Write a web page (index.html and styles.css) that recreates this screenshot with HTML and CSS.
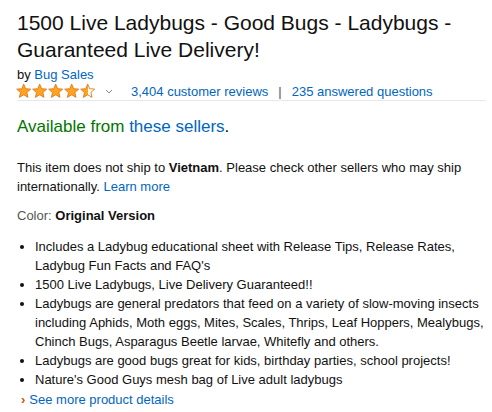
FILE: index.html
```html
<!DOCTYPE html>
<html>
<head>
<meta charset="utf-8">
<link rel="stylesheet" href="styles.css">
</head>
<body>
<div class="page">
  <h1 class="title">1500 Live Ladybugs - Good Bugs - Ladybugs - Guaranteed Live Delivery!</h1>
  <div class="byline">by <a class="link" href="#">Bug Sales</a></div>
  <div class="ratings">
    <span class="stars">
      <svg width="80" height="16" viewBox="0 0 78 15">
        <defs>
          <linearGradient id="half" x1="0" x2="1" y1="0" y2="0">
            <stop offset="50%" stop-color="#ffa41c"/>
            <stop offset="50%" stop-color="#ffffff"/>
          </linearGradient>
          <path id="st" d="M7.5 0.8 L9.4 5.3 L14.3 5.7 L10.6 8.9 L11.7 13.7 L7.5 11.2 L3.3 13.7 L4.4 8.9 L0.7 5.7 L5.6 5.3 Z"/>
        </defs>
        <use href="#st" x="0" fill="#ffa41c" stroke="#de7921" stroke-width="0.9"/>
        <use href="#st" x="15.6" fill="#ffa41c" stroke="#de7921" stroke-width="0.9"/>
        <use href="#st" x="31.2" fill="#ffa41c" stroke="#de7921" stroke-width="0.9"/>
        <use href="#st" x="46.8" fill="#ffa41c" stroke="#de7921" stroke-width="0.9"/>
        <use href="#st" x="62.4" fill="url(#half)" stroke="#de7921" stroke-width="0.9"/>
      </svg>
    </span>
    <svg class="chev" width="8" height="5" viewBox="0 0 8 5"><path d="M1 1 L4 4 L7 1" fill="none" stroke="#888" stroke-width="1"/></svg>
    <a class="link reviews" href="#">3,404 customer reviews</a>
    <span class="sep">|</span>
    <a class="link" href="#">235 answered questions</a>
  </div>
  <hr class="rule">
  <div class="avail"><span class="green">Available from</span> <a class="link" href="#">these sellers</a>.</div>
  <p class="ship">This item does not ship to <b>Vietnam</b>. Please check other sellers who may ship internationally. <a class="link" href="#">Learn more</a></p>
  <div class="color"><span class="label">Color:</span> <b>Original Version</b></div>
  <ul class="features">
    <li>Includes a Ladybug educational sheet with Release Tips, Release Rates, Ladybug Fun Facts and FAQ's</li>
    <li>1500 Live Ladybugs, Live Delivery Guaranteed!!</li>
    <li>Ladybugs are general predators that feed on a variety of slow-moving insects including Aphids, Moth eggs, Mites, Scales, Thrips, Leaf Hoppers, Mealybugs, Chinch Bugs, Asparagus Beetle larvae, Whitefly and others.</li>
    <li>Ladybugs are good bugs great for kids, birthday parties, school projects!</li>
    <li>Nature's Good Guys mesh bag of Live adult ladybugs</li>
  </ul>
  <div class="more"><span class="caret">›</span><a class="link" href="#">See more product details</a></div>
</div>
</body>
</html>
```
FILE: styles.css
```css
html, body {
  margin: 0;
  padding: 0;
  background: #fff;
}
body {
  font-family: "Liberation Sans", Arial, sans-serif;
  color: #111;
  font-size: 13px;
  line-height: 19px;
}
.page {
  padding: 9px 6px 0 17px;
}
.link {
  color: #0066c0;
  text-decoration: none;
}
.title {
  margin: 0;
  font-weight: 400;
  font-size: 21px;
  line-height: 27px;
  color: #111;
}
.byline {
  margin-top: 3px;
  line-height: 18px;
}
.ratings {
  display: flex;
  align-items: center;
  height: 18px;
  margin-top: -2px;
}
.stars {
  display: flex;
  margin-left: -1px;
}
.chev {
  margin-left: 9px;
  margin-right: 18px;
}
.sep {
  color: #555;
  margin: 0 10px;
}
.rule {
  border: 0;
  border-top: 1px solid #e7e7e7;
  margin: 0 0 0 0;
}
.avail {
  font-size: 17px;
  line-height: 24px;
  margin-top: 14px;
}
.green {
  color: #007600;
}
.ship {
  margin: 19px 0 0 0;
}
.color {
  margin-top: 10px;
}
.label {
  color: #555;
}
.features {
  margin: 12px 0 0 0;
  padding-left: 18px;
}
.features li {
  line-height: 19px;
}
.more {
  margin-top: 1px;
}
.caret {
  color: #c45500;
  font-weight: bold;
  margin-left: 4px;
  margin-right: 4px;
}
```
